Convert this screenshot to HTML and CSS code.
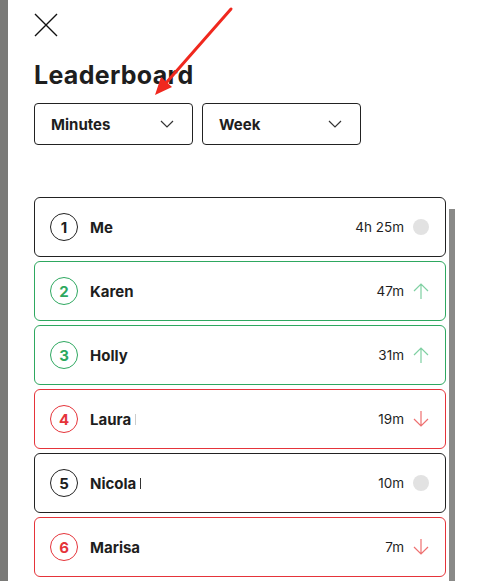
FILE: index.html
```html
<!DOCTYPE html>
<html lang="en">

<head>
    <title>Leaderboard</title>
    <link rel="stylesheet" href="styles.css">
</head>

<body>
    <div class="edge"></div>

    <main class="panel">
        <button class="close" type="button" aria-label="Close">
            <svg width="24" height="24" viewBox="0 0 24 24">
                <path d="M1 1 L23 23 M23 1 L1 23" stroke="#111" stroke-width="1.4" fill="none" />
            </svg>
        </button>

        <h1>Leaderboard</h1>

        <div class="filters">
            <div class="select">
                <span>Minutes</span>
                <svg width="14" height="8" viewBox="0 0 14 8">
                    <path d="M1 1 L7 7 L13 1" stroke="#333" stroke-width="1.2" fill="none" />
                </svg>
            </div>
            <div class="select">
                <span>Week</span>
                <svg width="14" height="8" viewBox="0 0 14 8">
                    <path d="M1 1 L7 7 L13 1" stroke="#333" stroke-width="1.2" fill="none" />
                </svg>
            </div>
        </div>

        <div class="board">
            <div class="list">
                <div class="row">
                    <span class="rank">1</span>
                    <span class="name">Me</span>
                    <span class="time">4h 25m</span>
                    <span class="dot"></span>
                </div>
                <div class="row up">
                    <span class="rank">2</span>
                    <span class="name">Karen</span>
                    <span class="time">47m</span>
                    <svg class="trend" width="16" height="18" viewBox="0 0 16 18">
                        <path d="M8 17 L8 2 M1 9 L8 2 L15 9" fill="none" />
                    </svg>
                </div>
                <div class="row up">
                    <span class="rank">3</span>
                    <span class="name">Holly</span>
                    <span class="time">31m</span>
                    <svg class="trend" width="16" height="18" viewBox="0 0 16 18">
                        <path d="M8 17 L8 2 M1 9 L8 2 L15 9" fill="none" />
                    </svg>
                </div>
                <div class="row down">
                    <span class="rank">4</span>
                    <span class="name">Laura <i class="mark light"></i></span>
                    <span class="time">19m</span>
                    <svg class="trend" width="16" height="18" viewBox="0 0 16 18">
                        <path d="M8 1 L8 16 M1 9 L8 16 L15 9" fill="none" />
                    </svg>
                </div>
                <div class="row">
                    <span class="rank">5</span>
                    <span class="name">Nicola <i class="mark"></i></span>
                    <span class="time">10m</span>
                    <span class="dot"></span>
                </div>
                <div class="row down">
                    <span class="rank">6</span>
                    <span class="name">Marisa</span>
                    <span class="time">7m</span>
                    <svg class="trend" width="16" height="18" viewBox="0 0 16 18">
                        <path d="M8 1 L8 16 M1 9 L8 16 L15 9" fill="none" />
                    </svg>
                </div>
            </div>
            <div class="scrollbar"></div>
        </div>
    </main>

    <!-- annotation arrow drawn over the screenshot -->
    <svg class="annotation" width="478" height="120" viewBox="0 0 478 120">
        <line x1="231" y1="9" x2="166" y2="83" stroke="#f0281e" stroke-width="3" stroke-linecap="round" />
        <polygon points="155,95 172,87 161,77" fill="#f0281e" />
    </svg>
</body>

</html>
```

FILE: styles.css
```css
html,
body {
    height: 100%;
}

body {
    font-family: Inter, "Liberation Sans", sans-serif;
    background-color: #fff;
    color: #1e1e1e;
    margin: 0;
    padding: 0;
    display: flex;
    overflow: hidden;
}

.edge {
    width: 8px;
    flex: none;
    background-color: #7a7a78;
}

.panel {
    flex: 1;
    padding: 13px 0 0 26px;
}

.close {
    display: block;
    width: 24px;
    height: 24px;
    padding: 0;
    border: none;
    background: none;
    cursor: pointer;
}

.close svg {
    display: block;
}

h1 {
    font-size: 25px;
    font-weight: 700;
    letter-spacing: 0.3px;
    line-height: 30px;
    margin: 23px 0 13px 0;
}

.filters {
    display: flex;
    gap: 9px;
}

.select {
    width: 159px;
    height: 42px;
    border: 1px solid #222;
    border-radius: 4px;
    display: flex;
    align-items: center;
    justify-content: space-between;
    padding: 0 18px 0 16px;
    box-sizing: border-box;
    font-size: 15px;
    font-weight: 700;
}

.select svg {
    display: block;
}

.board {
    margin-top: 52px;
    display: flex;
    gap: 3px;
}

.list {
    width: 412px;
    display: flex;
    flex-direction: column;
    gap: 4px;
}

.scrollbar {
    width: 6px;
    height: 372px;
    margin-top: 12px;
    background-color: #8a8a88;
}

.row {
    height: 60px;
    box-sizing: border-box;
    border: 1px solid #222;
    border-radius: 6px;
    display: flex;
    align-items: center;
    padding: 0 16px 0 15px;
}

.row.up {
    border-color: #2ea860;
}

.row.down {
    border-color: #e5343a;
}

.rank {
    width: 28px;
    height: 28px;
    box-sizing: border-box;
    border: 1px solid #222;
    border-radius: 50%;
    display: flex;
    align-items: center;
    justify-content: center;
    font-size: 15px;
    font-weight: 700;
}

.up .rank {
    border-color: #2ea860;
    color: #2ea860;
}

.down .rank {
    border-color: #e5343a;
    color: #e5343a;
}

.name {
    margin-left: 12px;
    font-size: 15px;
    font-weight: 700;
    flex: 1;
    display: flex;
    align-items: center;
}

.mark {
    display: inline-block;
    width: 1px;
    height: 11px;
    margin-left: 4px;
    background-color: #333;
}

.mark.light {
    background-color: #ccc;
}

.time {
    font-size: 13.5px;
    margin-right: 9px;
}

.dot {
    width: 16px;
    height: 16px;
    border-radius: 50%;
    background-color: #e2e2e2;
}

.trend {
    display: block;
    stroke-width: 1.2;
}

.up .trend {
    stroke: #7fd0a2;
}

.down .trend {
    stroke: #ee7070;
}

.annotation {
    position: absolute;
    top: 0;
    left: 0;
    pointer-events: none;
}
```
